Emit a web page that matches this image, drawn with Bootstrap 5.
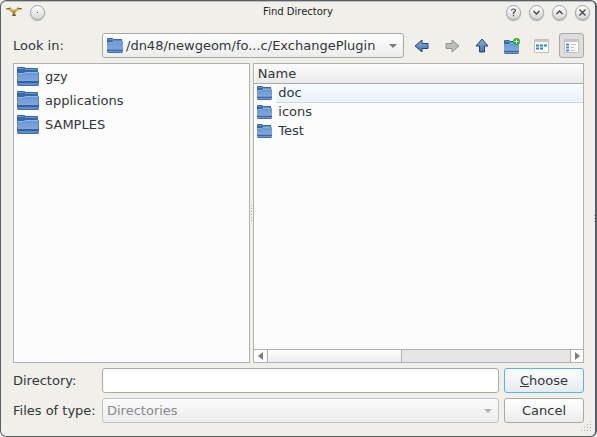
<!DOCTYPE html>
<html lang="en">
<head>
<meta charset="utf-8">
<meta name="viewport" content="width=device-width, initial-scale=1">
<title>Find Directory</title>
<link rel="stylesheet" href="https://cdn.jsdelivr.net/npm/bootstrap@5.3.0/dist/css/bootstrap.min.css">
<style>
body{font-family:"DejaVu Sans",sans-serif;font-size:13px;line-height:19px;color:#31363b;background:#fff}
.window{background:#f0efea;border:1px solid #5a5e69;border-right-width:2px;border-radius:6px;box-shadow:inset 0 1px #b9bbbb}
.titlebar{height:22px;padding:0 5px}
.titlebar h1{font-size:10px;line-height:20px;color:#222}
.side{width:88px}
.wbtn{width:15px;height:15px;border:1px solid #a3a5a7;border-radius:50%;background:linear-gradient(#fdfdfd,#d6d8da);box-shadow:0 1px 1px #aaa}
.work{padding:10px 11px 13px 12px;gap:5px}
.line{gap:5px}
.line label{width:84px;white-space:nowrap}
.box{height:25px;border:1px solid #a9aaa6;border-radius:3px;font-size:13px;line-height:19px;color:#31363b}
.combo{background:linear-gradient(#fff,#ececed);appearance:none;padding:0 24px 0 23px}
.combo:disabled{color:#888b8d;border-color:#c2c4c6;padding-left:4px;opacity:1;background:linear-gradient(#fbfbfb,#ececec)}
.folder-mark{left:5px;top:5px}
.arrow{right:7px;top:11px;pointer-events:none}
.tool{width:25px;height:25px;border:1px solid transparent;border-radius:3px;background:none}
.tool.on{background:#dedddd;border-color:#a9aaa6}
.push{width:80px;background:linear-gradient(#fff,#ececed)}
.push.main{border-color:#5cb5e0;background:linear-gradient(#fcfdfe,#e6ebee)}
.panes{gap:3px}
.pane{background:#fcfcfc;border:1px solid #b1b1ad}
.places{flex:237 1 0}
.files{flex:331 1 0}
.place{height:24px;padding:1px 3px 0;gap:6px;border:0;background:none;color:inherit;line-height:23px}
.listing{line-height:17px}
.listing th{height:19px;padding:0 3px;font-weight:400;background:linear-gradient(#fdfdfd,#e9e9e9);border-bottom:1px solid #a9a9a9}
.listing td{height:19px;padding:0 2px;border:1px solid transparent}
.listing td:first-child{width:21px;padding:0 0 0 2px}
.listing .picked{border-color:#c5d9e2;border-right:0;background:linear-gradient(#f9fcfd,#e7f2f8)}
.scroller{height:13px;border-top:1px solid #b1b1ad;background:#e5e7e7}
.scroller button{width:13px;border:0;background:#fcfcfc}
.scroller .next{border-left:1px solid #b1b1ad}
.thumb{width:41%;background:linear-gradient(#fff,#ececec);border:solid #b1b1ad;border-width:0 1px}
.dots{width:1px;background:repeating-linear-gradient(#aaa 0 1px,transparent 1px 3px)}
.split{height:16px;right:-3px;top:calc(50% - 8px)}
.edge{height:8px;right:0;top:calc(50% - 4px)}
.grip{right:3px;bottom:5px}
svg{display:block;flex:none}
</style>
<script src="https://cdn.jsdelivr.net/npm/bootstrap@5.3.0/dist/js/bootstrap.bundle.min.js"></script>
</head>
<body>
<svg width="0" height="0" class="position-absolute" aria-hidden="true">
<defs>
<linearGradient id="fg" x2="0" y2="1"><stop stop-color="#6696d2"/><stop offset="1" stop-color="#86a9d9"/></linearGradient>
<linearGradient id="ab" x2="0" y2="1"><stop stop-color="#8db2dc"/><stop offset="1" stop-color="#3d71b4"/></linearGradient>
<linearGradient id="gold" x2="0" y2="1"><stop stop-color="#f4d060"/><stop offset="1" stop-color="#76501a"/></linearGradient>
</defs>
<symbol id="folder" viewBox="0 0 22 19"><path d="M0 1Q0 0 1 0H7L9 1H20Q21 1 21 2V7H0Z" fill="#3468aa"/><path d="M1 1.500H7L8 2.500H20" fill="none" stroke="#6494d0"/><path d="M0 6H7L9 5H22V15H0Z" fill="url(#fg)"/><path d="M1 6.500H7L9 5.500H21" fill="none" stroke="#8fb6e4"/><path d="M.5 6V15M21.500 5V15" stroke="#5583c0"/><path d="M0 14H22V18Q22 19 21 19H1Q0 19 0 18Z" fill="#5c8ccb"/><path d="M0 15H22" stroke="#2f63a6" stroke-width="2"/><path d="M1 18.500H21" stroke="#486f9f"/></symbol>
<symbol id="folder-s" viewBox="0 0 15 14"><path d="M0 1Q0 0 1 0H5L6 1H14V5H0Z" fill="#3468aa"/><path d="M1 1.500H5L6 2.500H13" fill="none" stroke="#6494d0"/><path d="M0 4H5L6 3H15V11H0Z" fill="url(#fg)"/><path d="M1 4.500H5L6 3.500H14" fill="none" stroke="#86afe0"/><path d="M0 10H15V13Q15 14 14 14H1Q0 14 0 13Z" fill="#6a98d3"/><path d="M0 11.500H15" stroke="#3468aa"/><path d="M1 13.500H14" stroke="#486f9f"/></symbol>
<symbol id="arr" viewBox="0 0 16 14"><path d="M1 7L8 1V4.500H14V9.500H8V13Z" stroke-linejoin="round"/></symbol>
</svg>
<main class="window vh-100 d-flex flex-column position-relative">
<header class="titlebar d-flex align-items-center justify-content-between">
<div class="side d-flex align-items-center gap-2">
<svg width="16" height="10" viewBox="0 0 16 10"><path d="M0 2L5 1L8 3L11 1L16 2L11 4L9 6L10 9H6L7 6L4 4Z" fill="url(#gold)"/><path d="M0 2L5 1M11 1L16 2" stroke="#7b5424"/></svg>
<button class="wbtn p-0" aria-label="Window menu"><svg width="13" height="13"><path d="M6 6h1v1h-1z" fill="#555"/></svg></button>
</div>
<h1 class="m-0 fw-normal">Find Directory</h1>
<div class="side d-flex align-items-center justify-content-end gap-2">
<button class="wbtn p-0" aria-label="Help"><svg width="13" height="13" fill="none" stroke="#444" stroke-width="1.2"><path d="M4.500 4.500Q4.500 3 6.500 3T8.500 4.500Q8.500 5.500 6.500 6.500V8M6.500 9V10.300"/></svg></button>
<button class="wbtn p-0" aria-label="Minimize"><svg width="13" height="13" fill="none" stroke="#444" stroke-width="1.3"><path d="M3.500 5L6.500 8L9.500 5"/></svg></button>
<button class="wbtn p-0" aria-label="Maximize"><svg width="13" height="13" fill="none" stroke="#444" stroke-width="1.3"><path d="M3.500 8L6.500 5L9.500 8"/></svg></button>
<button class="wbtn p-0" aria-label="Close"><svg width="13" height="13" fill="none" stroke="#444" stroke-width="1.3"><path d="M3.500 3.500L9.500 9.500M9.500 3.500L3.500 9.500"/></svg></button>
</div>
</header>
<div class="work d-flex flex-column flex-grow-1">
<div class="line d-flex align-items-center">
<label for="look">Look in:</label>
<div class="position-relative flex-grow-1">
<select id="look" class="box combo w-100 d-block"><option>/dn48/newgeom/fo...c/ExchangePlugin</option></select>
<svg class="folder-mark position-absolute" width="16" height="15"><use href="#folder-s"/></svg>
<svg class="arrow position-absolute" width="8" height="4"><path d="M0 0H8L4 4Z" fill="#7b7d80"/></svg>
</div>
<button class="tool p-0 d-flex align-items-center justify-content-center" aria-label="Back"><svg width="16" height="14" fill="url(#ab)" stroke="#25456f"><use href="#arr"/></svg></button>
<button class="tool p-0 d-flex align-items-center justify-content-center" aria-label="Forward"><svg width="16" height="14" viewBox="0 0 16 14" fill="#bbbcbc" stroke="#929393"><path d="M15 7L8 1V4.500H2V9.500H8V13Z" stroke-linejoin="round"/></svg></button>
<button class="tool p-0 d-flex align-items-center justify-content-center" aria-label="Parent directory"><svg width="14" height="16" viewBox="0 0 14 16" fill="url(#ab)" stroke="#25456f"><path d="M7 1L13 8H9.500V14H4.500V8H1Z" stroke-linejoin="round"/></svg></button>
<button class="tool p-0 d-flex align-items-center justify-content-center" aria-label="New folder"><svg width="16" height="16" viewBox="0 0 16 16"><use href="#folder-s" y="2" width="15" height="14"/><circle cx="12.500" cy="3.500" r="3.500" fill="#23b52b"/><path d="M12.500 1.500V5.500M10.500 3.500H14.500" stroke="#fff"/></svg></button>
<button class="tool p-0 d-flex align-items-center justify-content-center" aria-label="List view"><svg width="15" height="14"><path d="M.5.500H14.500V13.500H.5Z" fill="#fcfcfc" stroke="#c0c1c1"/><path d="M1 2H14" stroke="#c7c7c7" stroke-width="2"/><path d="M2 6.500H5M6 6.500H9M10 6.500H13M2 9.500H5M6 9.500H9" stroke="#2f7de0" stroke-width="2"/></svg></button>
<button class="tool on p-0 d-flex align-items-center justify-content-center" aria-label="Detail view" aria-pressed="true"><svg width="15" height="14"><path d="M.5.500H14.500V13.500H.5Z" fill="#fcfcfc" stroke="#c0c1c1"/><path d="M1 2H14" stroke="#c7c7c7" stroke-width="2"/><path d="M2 5.500H5M2 8.500H5M2 11.500H5" stroke="#4a8ce0" stroke-width="2"/><path d="M7 5.500H12M7 8.500H10M7 11.500H11" stroke="#bbb"/></svg></button>
</div>
<div class="panes d-flex flex-grow-1">
<nav class="pane places position-relative d-flex flex-column" aria-label="Places">
<button class="place d-flex align-items-center text-start"><svg width="22" height="19"><use href="#folder"/></svg>gzy</button>
<button class="place d-flex align-items-center text-start"><svg width="22" height="19"><use href="#folder"/></svg>applications</button>
<button class="place d-flex align-items-center text-start"><svg width="22" height="19"><use href="#folder"/></svg>SAMPLES</button>
<span class="dots split position-absolute"></span>
</nav>
<section class="pane files d-flex flex-column justify-content-between">
<table class="listing w-100">
<thead><tr><th colspan="2" scope="col">Name</th></tr></thead>
<tbody>
<tr><td><svg width="15" height="14"><use href="#folder-s"/></svg></td><td class="picked">doc</td></tr>
<tr><td><svg width="15" height="14"><use href="#folder-s"/></svg></td><td>icons</td></tr>
<tr><td><svg width="15" height="14"><use href="#folder-s"/></svg></td><td>Test</td></tr>
</tbody>
</table>
<div class="scroller d-flex">
<button class="p-0 d-flex align-items-center justify-content-center" aria-label="Scroll left"><svg width="5" height="8"><path d="M5 0V8L0 4Z" fill="#7b7d80"/></svg></button>
<div class="thumb me-auto"></div>
<button class="next p-0 d-flex align-items-center justify-content-center" aria-label="Scroll right"><svg width="5" height="8"><path d="M0 0V8L5 4Z" fill="#7b7d80"/></svg></button>
</div>
</section>
</div>
<div class="line d-flex align-items-center">
<label for="dir">Directory:</label>
<input id="dir" type="text" class="box flex-grow-1 px-1">
<button class="box push main p-0"><u>C</u>hoose</button>
</div>
<div class="line d-flex align-items-center">
<label for="type">Files of type:</label>
<div class="position-relative flex-grow-1">
<select id="type" class="box combo w-100 d-block" disabled><option>Directories</option></select>
<svg class="arrow position-absolute" width="8" height="4"><path d="M0 0H8L4 4Z" fill="#aeb0b2"/></svg>
</div>
<button class="box push p-0">Cancel</button>
</div>
</div>
<span class="dots edge position-absolute"></span>
<svg class="grip position-absolute" width="11" height="10" fill="#aaa"><path d="M9 0h1v1h-1zM9 3h1v1h-1zM6 3h1v1h-1zM9 6h1v1h-1zM6 6h1v1h-1zM3 6h1v1h-1zM9 9h1v1h-1zM6 9h1v1h-1zM3 9h1v1h-1zM0 9h1v1h-1z"/></svg>
</main>
</body>
</html>
